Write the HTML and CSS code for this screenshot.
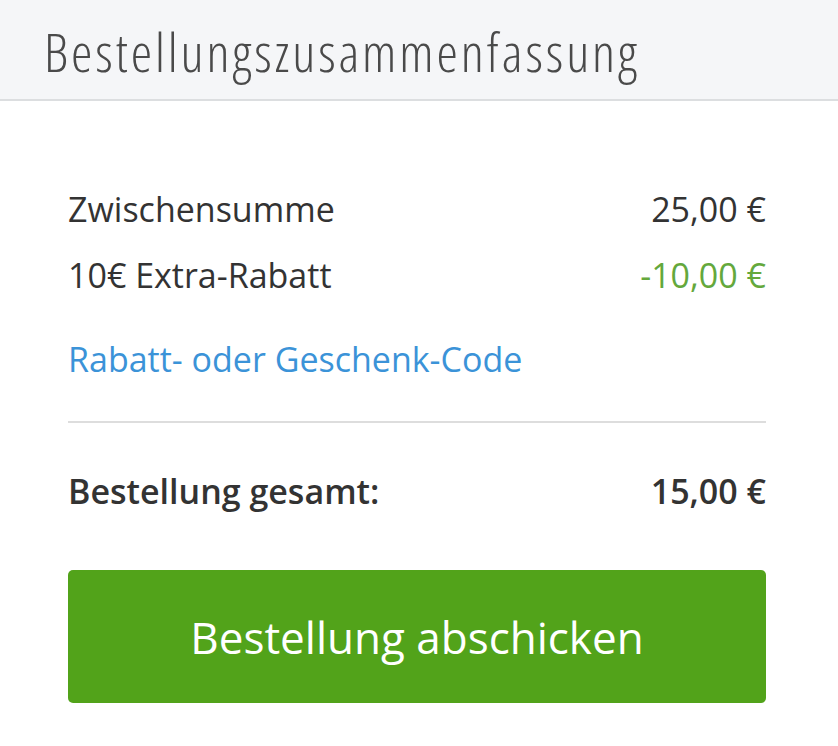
FILE: index.html
```html
<!DOCTYPE html>
<html lang="de">
<head>
<meta charset="utf-8">
<link rel="stylesheet" href="styles.css">
</head>
<body>
<div class="panel">
  <div class="panel-header">
    <h2 class="title">Bestellungszusammenfassung</h2>
  </div>
  <div class="panel-body">
    <div class="row">
      <span>Zwischensumme</span>
      <span>25,00 €</span>
    </div>
    <div class="row second">
      <span>10€ Extra-Rabatt</span>
      <span class="green">-10,00 €</span>
    </div>
    <a class="code-link" href="#">Rabatt- oder Geschenk-Code</a>
    <hr class="divider">
    <div class="row total">
      <span>Bestellung gesamt:</span>
      <span>15,00 €</span>
    </div>
    <button class="submit">Bestellung abschicken</button>
  </div>
</div>
</body>
</html>
```
FILE: styles.css
```css
html, body {
  margin: 0;
  padding: 0;
  background: #ffffff;
}
body {
  font-family: "Open Sans", "Noto Sans", sans-serif;
  color: #333333;
}
.panel-header {
  background: #f5f6f8;
  border-bottom: 2px solid #dcdee0;
  padding: 1px 0 0 44px;
  height: 101px;
  box-sizing: border-box;
}
.title {
  margin: 0;
  font-weight: 300;
  font-size: 54px;
  font-stretch: 75%;
  letter-spacing: 2.9px;
  line-height: 100px;
  color: #4a4a4a;
}
.panel-body {
  padding: 77px 72px 40px 68px;
  display: flex;
  flex-direction: column;
}
.row {
  display: flex;
  justify-content: space-between;
  font-size: 34px;
  line-height: 63px;
}
.row.second {
  margin-top: 3px;
}
.green {
  color: #64a83c;
}
.code-link {
  color: #3b93d8;
  text-decoration: none;
  font-size: 34px;
  line-height: 63px;
  margin-top: 21px;
}
.divider {
  border: 0;
  border-top: 2px solid #dddddd;
  margin: 30px 0 0;
}
.total {
  font-weight: 600;
  font-size: 34px;
  margin-top: 37px;
}
.submit {
  margin-top: 47px;
  background: #52a31a;
  color: #fff;
  border: 0;
  border-radius: 5px;
  font-family: inherit;
  font-size: 44px;
  height: 133px;
}
```
